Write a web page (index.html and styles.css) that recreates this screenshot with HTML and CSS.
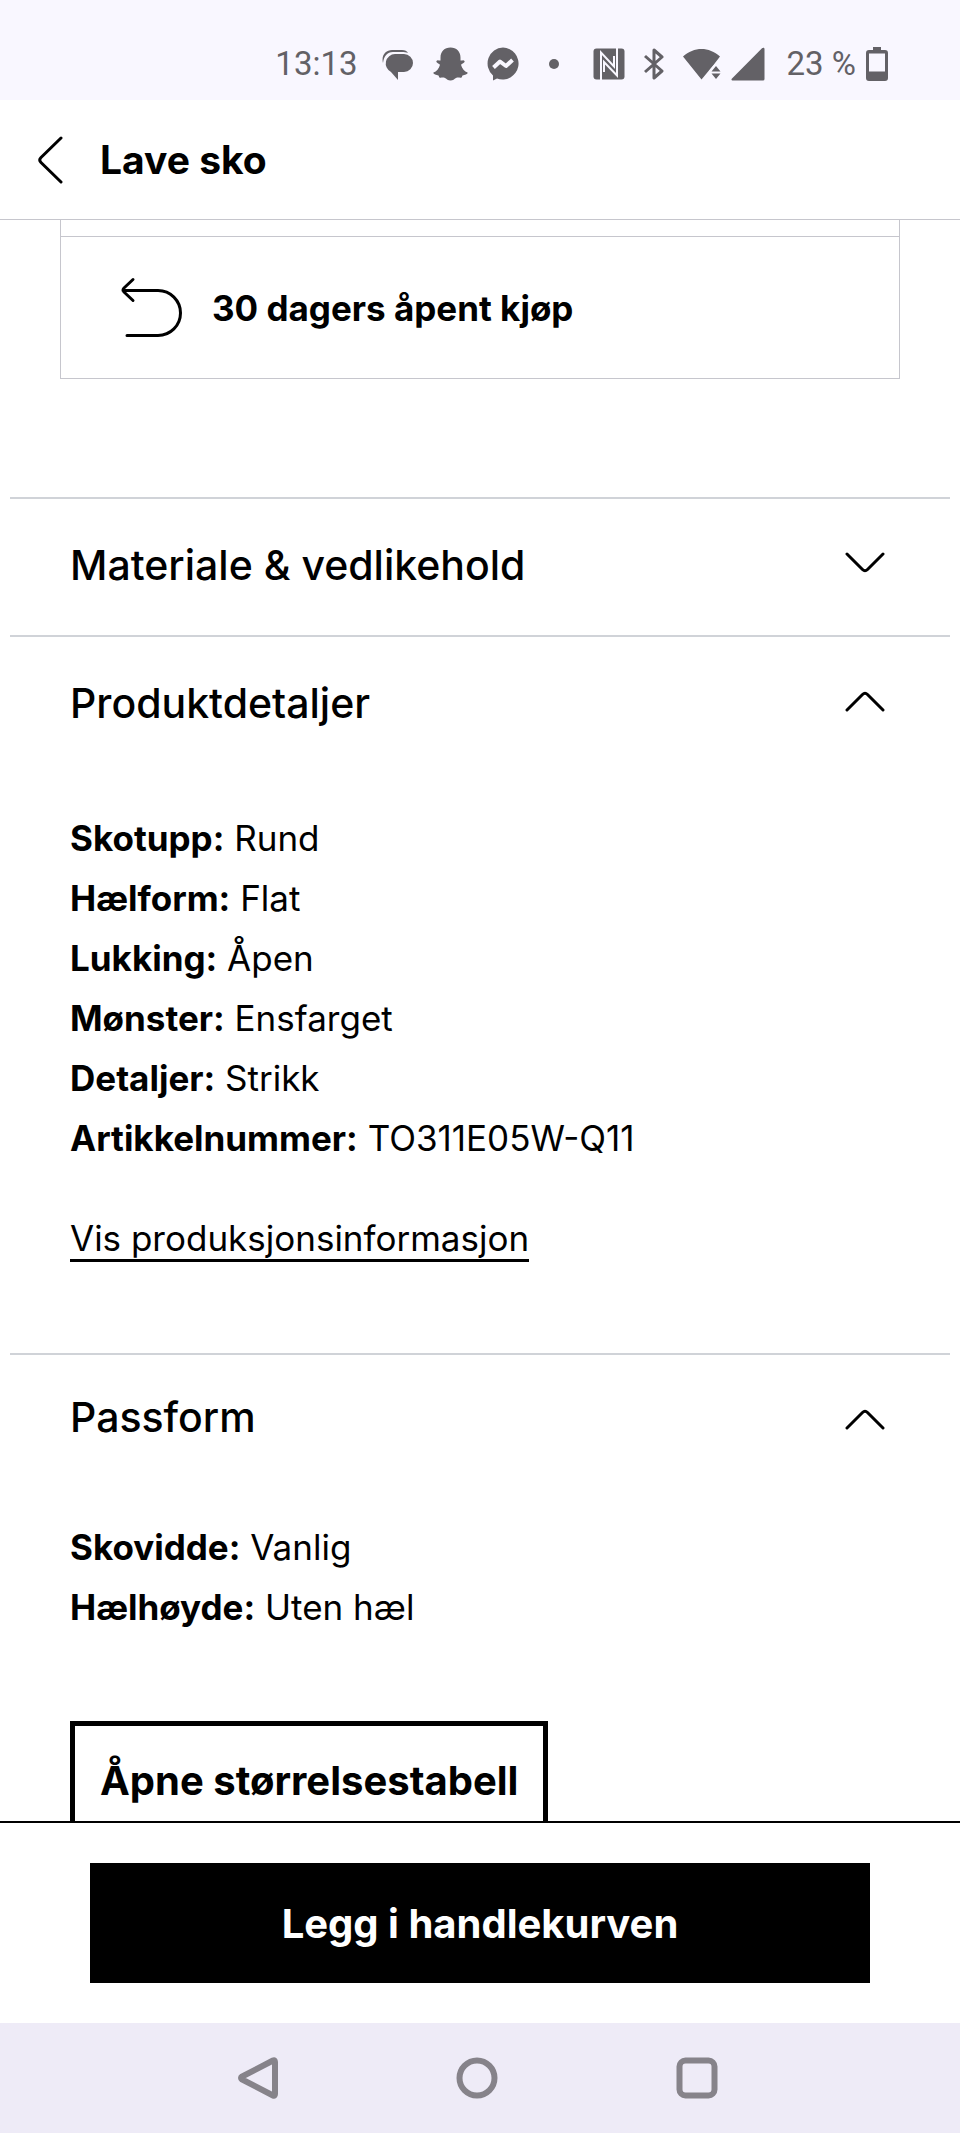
FILE: index.html
```html
<!DOCTYPE html>
<html lang="no">
<head>
    <meta charset="UTF-8">
    <meta name="viewport" content="width=device-width, initial-scale=1.0">
    <title>Lave sko</title>
    <link rel="stylesheet" href="styles.css">
</head>
<body>
    <div class="status-bar">
        <span class="clock">13:13</span>
        <div class="status-group">
            <svg width="32" height="34" viewBox="0 0 32 34" fill="currentColor">
                <path d="M13 7h9a9 9 0 0 1 0 18h-6v8l-7-8A9.500 9.500 0 0 1 13 7z"/>
                <path d="M1 16C-1 8 4 3 10 3h10c3 0 5 1 6 3-2-1-4-1-6-1h-9C5 5 2 9 1 16z"/>
            </svg>
            <svg width="35" height="34" viewBox="0 0 35 34" fill="currentColor">
                <path d="M17.500 0.500c6 0 10 4 10 10v3c1 .5 3-1 4 .5.8 1.500-1.500 2.500-3.500 3.700 1 4 3.500 6.800 6.500 7.800 1 1.500-2.500 2.500-5 3-.6 1-.5 2-1.500 2.200-1.500.2-3-.6-5 .3-1.700 1-3 2.500-5.500 2.500S13.700 32 12 31c-2-.9-3.500-.1-5-.3-1-.2-.9-1.200-1.500-2.200-2.500-.5-6-1.500-5-3 3-1 5.500-3.800 6.500-7.800-2-1.200-4.300-2.200-3.500-3.700 1-1.500 3 0 4-.5v-3c0-6 4-10 10-10z"/>
            </svg>
            <svg width="32" height="34" viewBox="0 0 32 34">
                <path fill="currentColor" d="M16 .5A16 16 0 1 1 10 31.500L6 33.500v-5A16 16 0 0 1 16 .5z"/>
                <path fill="none" stroke="#f9f7ff" stroke-width="4" stroke-linejoin="round" d="M6.500 20.500l6.500-6 6 4.500 6.500-6"/>
            </svg>
        </div>
        <span class="more-dot"></span>
        <div class="status-group">
            <svg width="32" height="32" viewBox="0 0 32 32">
                <rect width="31" height="31" x=".5" y=".5" rx="3" fill="currentColor"/>
                <g fill="none" stroke="#f9f7ff" stroke-width="2">
                    <path d="M8 32V4.500l13 14V8"/>
                    <path d="M24 0v27.500L11 14v10"/>
                </g>
            </svg>
            <svg width="20" height="32" viewBox="0 0 20 32">
                <path fill="none" stroke="currentColor" stroke-width="3" stroke-linejoin="round" d="M1 8l17 15-8 7V2l8 7L1 24"/>
            </svg>
            <div class="signal-group">
                <svg width="38" height="32" viewBox="0 0 38 32" fill="currentColor">
                    <path d="M0 8.500C11-1.500 26-1.500 37 8.500L30.500 17 28 20l-9.500 11.500z"/>
                    <path stroke="#f9f7ff" stroke-width="2" d="M27 33V23l6-7 6 7V33z" fill="#f9f7ff"/>
                    <path d="M33 18l4.500 5.500h-9zM33 31l4.500-5.500h-9z"/>
                </svg>
                <svg width="34" height="34" viewBox="0 0 34 34" fill="currentColor">
                    <path d="M33.500 2v30a1.500 1.500 0 0 1-1.500 1.500H2C.5 33.500 0 32.500 1 31.500L31 1.300c1-1 2.500-.8 2.500.7z"/>
                </svg>
            </div>
        </div>
        <div class="battery">
            <span>23 %</span>
            <svg width="22" height="34" viewBox="0 0 22 34">
                <path fill="currentColor" fill-rule="evenodd" d="M7 0h8v3h4a3 3 0 0 1 3 3v25a3 3 0 0 1-3 3H3a3 3 0 0 1-3-3V6a3 3 0 0 1 3-3h4zM3 6.500v18h16v-18z"/>
            </svg>
        </div>
    </div>

    <header class="top-bar">
        <button class="back-btn" aria-label="Tilbake">
            <svg width="26" height="48" viewBox="0 0 26 48">
                <path d="M23 2L3 21.500q-2.500 2.500 0 5L23 46"/>
            </svg>
        </button>
        <h1>Lave sko</h1>
    </header>

    <main class="content">
        <ul class="benefits">
            <li class="benefit-previous"></li>
            <li class="benefit">
                <svg width="62" height="62" viewBox="0 0 62 62">
                    <path d="M12 2.500L3 11q-2 2 0 4l9 8.500M2 13.500h35a22.500 22.500 0 0 1 0 45H6"/>
                </svg>
                <span>30 dagers åpent kjøp</span>
            </li>
        </ul>

        <section class="section">
            <button class="section-toggle" aria-expanded="false">
                <span>Materiale &amp; vedlikehold</span>
                <svg width="40" height="22" viewBox="0 0 40 22">
                    <path d="M2 2l15.500 15.500q2.500 2.500 5 0L38 2"/>
                </svg>
            </button>
        </section>

        <section class="section">
            <button class="section-toggle" aria-expanded="true">
                <span>Produktdetaljer</span>
                <svg width="40" height="22" viewBox="0 0 40 22">
                    <path d="M2 20L17.500 4.500q2.500-2.500 5 0L38 20"/>
                </svg>
            </button>
            <div class="details">
                <p><b>Skotupp:</b> Rund</p>
                <p><b>Hælform:</b> Flat</p>
                <p><b>Lukking:</b> Åpen</p>
                <p><b>Mønster:</b> Ensfarget</p>
                <p><b>Detaljer:</b> Strikk</p>
                <p><b>Artikkelnummer:</b> TO311E05W-Q11</p>
                <a class="details-link" href="#">Vis produksjonsinformasjon</a>
            </div>
        </section>

        <section class="section section-fit">
            <button class="section-toggle" aria-expanded="true">
                <span>Passform</span>
                <svg width="40" height="22" viewBox="0 0 40 22">
                    <path d="M2 20L17.500 4.500q2.500-2.500 5 0L38 20"/>
                </svg>
            </button>
            <div class="details">
                <p><b>Skovidde:</b> Vanlig</p>
                <p><b>Hælhøyde:</b> Uten hæl</p>
                <button class="size-btn">Åpne størrelsestabell</button>
            </div>
        </section>
    </main>

    <footer class="cart-bar">
        <button class="cart-btn">Legg i handlekurven</button>
    </footer>

    <nav class="system-nav">
        <button aria-label="Tilbake">
            <svg width="42" height="42" viewBox="0 0 42 42">
                <path d="M37 3.500Q39 2.500 39 5v32q0 2.500-2 1.500L6 22.500q-2-1.500 0-3z"/>
            </svg>
        </button>
        <button aria-label="Hjem">
            <svg width="42" height="42" viewBox="0 0 42 42">
                <circle cx="21" cy="21" r="17.500"/>
            </svg>
        </button>
        <button aria-label="Oversikt">
            <svg width="42" height="42" viewBox="0 0 42 42">
                <rect x="3.500" y="3.500" width="35" height="35" rx="6"/>
            </svg>
        </button>
    </nav>
</body>
</html>
```

FILE: styles.css
```css
* {
    box-sizing: border-box;
}
body {
    margin: 0;
    height: 100vh;
    display: flex;
    flex-direction: column;
    background: #fff;
    color: #000;
    font-family: Inter, "Liberation Sans", sans-serif;
}
button {
    margin: 0;
    padding: 0;
    border: none;
    background: none;
    color: inherit;
    font: inherit;
    cursor: pointer;
}
svg {
    display: block;
    flex-shrink: 0;
}

/* Phone status bar */
.status-bar {
    flex-shrink: 0;
    display: flex;
    justify-content: flex-end;
    align-items: center;
    height: 100px;
    padding: 28px 72px 0 0;
    background: #f9f7ff;
    color: #636166;
    font: 400 33px/36px Roboto, sans-serif;
}
.clock {
    margin-right: 24px;
}
.status-group {
    display: flex;
    align-items: center;
    gap: 19px;
}
.more-dot {
    width: 10px;
    height: 10px;
    margin: 0 34px 0 30px;
    border-radius: 50%;
    background: currentColor;
}
.signal-group,
.battery {
    display: flex;
    align-items: center;
    gap: 10px;
}
.battery {
    margin-left: 22px;
}

/* Header */
.top-bar {
    flex-shrink: 0;
    display: flex;
    align-items: center;
    gap: 36px;
    height: 120px;
    padding-left: 38px;
    border-bottom: 1px solid #c6c6cd;
}
.top-bar h1 {
    margin: 0;
    font-size: 39px;
    font-weight: 700;
    line-height: 48px;
}
.back-btn svg,
.benefit svg,
.section-toggle svg {
    fill: none;
    stroke: #000;
    stroke-width: 3;
    stroke-linecap: round;
    stroke-linejoin: round;
}

/* Content */
.content {
    flex: 1;
    min-height: 0;
    overflow: hidden;
}
.benefits {
    list-style: none;
    margin: 0 60px 118px;
    padding: 0;
    border: 1px solid #c6c6cd;
    border-top: none;
}
.benefit-previous {
    height: 16px;
}
.benefit {
    display: flex;
    align-items: center;
    gap: 29px;
    height: 142px;
    padding-left: 60px;
    border-top: 1px solid #c6c6cd;
    font-size: 35px;
    font-weight: 700;
}
.section {
    margin: 0 10px;
    border-top: 2px solid #d0d3d8;
}
.section-toggle {
    display: flex;
    justify-content: space-between;
    align-items: center;
    width: 100%;
    height: 136px;
    padding: 0 65px 8px 60px;
    font-size: 41px;
    font-weight: 500;
    line-height: 48px;
}
.section-toggle span {
    padding-top: 4px;
}
.details {
    padding: 35px 60px 85px;
    font-size: 35px;
    font-weight: 400;
    line-height: 60px;
}
.details p {
    margin: 0;
}
.details b {
    font-weight: 700;
}
.details-link {
    display: inline-block;
    margin-top: 49px;
    border-bottom: 3px solid #000;
    color: #000;
    line-height: 42px;
    text-decoration: none;
}
.section-fit .section-toggle span {
    padding: 0 0 4px;
}
.section-fit .details {
    padding-top: 26px;
}
.size-btn {
    display: block;
    margin-top: 84px;
    height: 120px;
    padding: 0 25px;
    border: 5px solid #000;
    font-size: 40px;
    font-weight: 700;
    line-height: 48px;
}

/* Add to cart */
.cart-bar {
    flex-shrink: 0;
    padding: 40px 90px;
    border-top: 2px solid #000;
}
.cart-btn {
    width: 100%;
    height: 120px;
    background: #000;
    color: #fff;
    font-size: 40px;
    font-weight: 700;
}

/* Phone navigation bar */
.system-nav {
    flex-shrink: 0;
    display: flex;
    justify-content: center;
    align-items: center;
    gap: 178px;
    height: 110px;
    padding-right: 7px;
    background: #eeebf7;
}
.system-nav svg {
    fill: none;
    stroke: #86838a;
    stroke-width: 6;
}
```
